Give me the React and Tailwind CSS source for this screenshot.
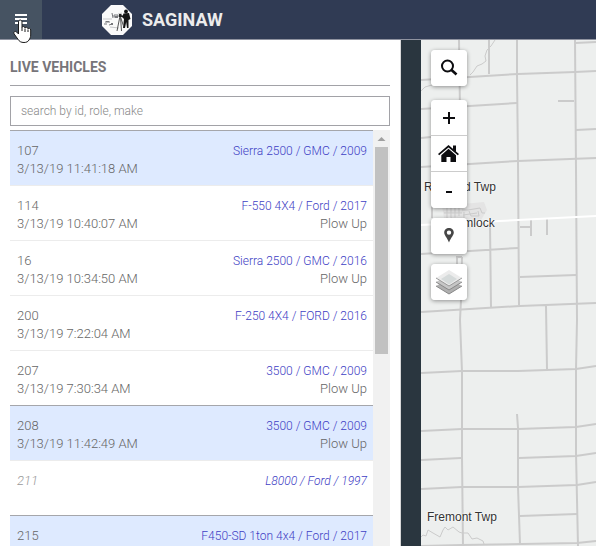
import React from "react";

const vehicles = [
  { id: "107", time: "3/13/19 11:41:18 AM", model: "Sierra 2500 / GMC / 2009", active: true },
  { id: "114", time: "3/13/19 10:40:07 AM", model: "F-550 4X4 / Ford / 2017", status: "Plow Up" },
  { id: "16", time: "3/13/19 10:34:50 AM", model: "Sierra 2500 / GMC / 2016", status: "Plow Up" },
  { id: "200", time: "3/13/19 7:22:04 AM", model: "F-250 4X4 / FORD / 2016" },
  { id: "207", time: "3/13/19 7:30:34 AM", model: "3500 / GMC / 2009", status: "Plow Up" },
  { id: "208", time: "3/13/19 11:42:49 AM", model: "3500 / GMC / 2009", status: "Plow Up", active: true },
  { id: "211", model: "L8000 / Ford / 1997", idle: true },
  { id: "215", model: "F450-SD 1ton 4x4 / Ford / 2017", active: true },
];

function Logo() {
  return (
    <svg className="h-[30px] w-[30px]" viewBox="0 0 30 30" aria-hidden="true">
      <path d="M9 0H21L30 9V21L21 30H9L0 21V9Z" fill="#fafafa" />
      <path d="M12 10h4v2h-4zM10 8l1 5M3 17h5M2 19h3M7 20l3-1" stroke="#77787c" fill="none" />
      <path d="M13 11h3v2h-3zM4 16h3v1H4zM9 18h2v2H9z" fill="#77787c" />
      <path d="M1 14h9M8 22l9 1M16 9l4-1" stroke="#c9cacc" fill="none" />
      <circle cx="24" cy="6.500" r="1.900" fill="#111" />
      <path d="M21.500 8.500l5.500-.5 1.500 6-2 1v8h-1.500l-.8-6-1.200 6h-2l1-9-2-2-2.500-.5.300-1.500 3 .5z" fill="#151515" />
      <path d="M18 11l-3 15M18.500 12l1 14M18.500 12l3 9" stroke="#555" fill="none" />
      <path d="M17 9h2.500v3H17z" fill="#222" />
    </svg>
  );
}

function HandCursor() {
  return (
    <svg className="pointer-events-none absolute left-[13px] top-[19px] z-20 h-[25px] w-[19px]" viewBox="0 0 19 25" aria-hidden="true">
      <path
        d="M5.500 15V3c0-2.600 3.500-2.600 3.500 0v5.500c.5-1.500 3-1.300 3 .5.600-1.200 3-.9 3 .8.700-1 2.700-.5 2.700 1.200V16c0 2-.7 3.500-1.700 5-.8 1.600-2.500 2.500-5 2.500-3 0-4.600-1-6-3.200L1.200 15C0 13 2.200 11.600 3.600 13z"
        fill="#fff"
        stroke="#1b1b1b"
        strokeLinejoin="round"
      />
      <path d="M9 8.500V12M12 9.500V13M15 10.500V13" stroke="#1b1b1b" fill="none" />
    </svg>
  );
}

function Header() {
  return (
    <header className="flex h-10 shrink-0 items-stretch border-b border-[#8f93a0] bg-[#303b54] text-[#ececec]">
      <button type="button" aria-label="Toggle menu" className="relative flex w-[42px] justify-center bg-[#465362] pt-3.5">
        <svg className="h-3 w-3" viewBox="0 0 12 12" aria-hidden="true">
          <path d="M0 1H12M0 5H12M0 9H12" stroke="#fff" strokeWidth="2" />
        </svg>
        <HandCursor />
      </button>
      <div className="ml-[60px] flex items-center gap-2.5">
        <Logo />
        <h1 className="text-[18px] font-bold leading-5">SAGINAW</h1>
      </div>
    </header>
  );
}

function VehicleRow({ vehicle }) {
  const { id, time, model, status, active, idle } = vehicle;
  return (
    <li
      className={`flex h-[55px] justify-between border-t px-1.5 pt-[11px] leading-[18px] ${
        active ? "border-[#a5a6ab] bg-[#deeaff]" : "border-[#ececec]"
      } ${idle ? "italic text-[#999]" : "text-[#666]"}`}
    >
      <div className="pl-px text-[13px]">
        <div>{id}</div>
        <div>{time}</div>
      </div>
      <div className="text-right">
        <a href="#vehicle" className="block text-[12px] text-[#4040c4]">{model}</a>
        <div className="text-[13px]">{status}</div>
      </div>
    </li>
  );
}

function Scrollbar() {
  return (
    <div className="flex w-[17px] shrink-0 flex-col items-center bg-[#f1f1f1]" aria-hidden="true">
      <svg className="h-[17px] w-[17px] shrink-0" viewBox="0 0 17 17">
        <path d="M4.500 11L8.500 7L12.500 11Z" fill="#a0a0a0" />
      </svg>
      <div className="h-[207px] w-[13px] bg-[#c1c1c1]" />
    </div>
  );
}

function Sidebar() {
  return (
    <aside className="flex min-h-0 min-w-0 flex-1 flex-col border-r border-[#d8d8d8] bg-white px-2.5">
      <h2 className="pb-[9px] pt-[18px] text-[14px] font-bold leading-[18px] text-[#77757a]">LIVE VEHICLES</h2>
      <div className="border-t border-[#a2a2a7]" />
      <input
        type="text"
        aria-label="Search vehicles"
        placeholder="search by id, role, make"
        className="mt-2.5 h-[30px] w-full shrink-0 border border-[#a2a2a7] px-2.5 text-[12px] font-light outline-none placeholder:text-[#888]"
      />
      <div className="mt-1 flex min-h-0 flex-1 overflow-hidden">
        <ul className="min-w-0 flex-1 font-light">
          {vehicles.map((vehicle) => (
            <VehicleRow key={vehicle.id} vehicle={vehicle} />
          ))}
        </ul>
        <Scrollbar />
      </div>
    </aside>
  );
}

function Roads() {
  return (
    <svg className="absolute inset-0 h-full w-full" viewBox="421 40 175 506" preserveAspectRatio="xMinYMin slice" aria-hidden="true">
      <path d="M442 206l42-4 3 8-6 10-36 4z" fill="#e4e4e4" />
      <g fill="none" stroke="#cbcbcb" strokeWidth="2">
        <path d="M459 40L460 110M489 40V74M517 40V74L518 162L519 305M575 40L576 170L577 320L576 369V453L578 546" />
        <path d="M421 80L518 74L575 72L596 71M421 109L517 103M421 138L431 137M421 167L518 161L596 158M575 43L596 42M558 101H574M576 130L596 129" />
        <path d="M421 254L518 248M490 225L491 307M520 227H530M531 219V236M547 218V235M520 277L576 275M421 312L520 306L596 303M546 306L547 369" />
        <path d="M462 257L461 300L460 320L462 372V458L463 546M457 264V257H462M432 203V218" />
        <path d="M421 373L462 371H518L576 369L596 366M517 414L518 428V487L520 544M421 431L462 429H518L576 427L596 424M421 460L461 458M519 458L576 456L596 453" />
        <path d="M421 489L462 487H518L577 485L596 482M520 516L577 514M421 546L462 545L577 543L596 541" />
      </g>
      <g fill="none" stroke="#cbcbcb">
        <path d="M444 213H462M447 207V218M451 205V218M455 204V218M459 207V216M462 210H468L480 208L482 213H485M464 212V218M469 211L471 216H479L478 211M463 215L477 213" />
        <path d="M495 40L491 46L487 50L485 56L486 61L482 64L477 66L473 72L470 75M421 91L425 87L432 85" />
        <path d="M421 537L423 535L426 536L428 530L433 533L440 537L443 530L445 527L448 530L453 527L459 532L462 533H468L472 539L477 538L483 541L484 544" />
      </g>
      <path d="M421 225L596 216" stroke="#fff" strokeWidth="2" />
    </svg>
  );
}

const buttonBase = "flex h-9 w-9 items-center justify-center bg-white text-[#0c0c0f]";
const card = "overflow-hidden rounded shadow-[0_1px_4px_rgba(0,0,0,0.4)]";

function MapControls() {
  return (
    <div className="relative flex w-fit flex-col gap-2.5 pl-2.5 pt-2.5">
      <div className={`${card} mb-1`}>
        <button type="button" aria-label="Search" className={buttonBase}>
          <svg className="h-[18px] w-[18px]" viewBox="0 0 18 18" aria-hidden="true">
            <circle cx="7.500" cy="7" r="5.500" fill="none" stroke="currentColor" strokeWidth="2" />
            <path d="M11 10.500L16.500 15.500" stroke="currentColor" strokeWidth="2.600" />
          </svg>
        </button>
      </div>
      <div className={`${card} flex flex-col divide-y divide-[#ccc]`}>
        <button type="button" aria-label="Zoom in" className={buttonBase}>
          <svg className="h-3 w-3" viewBox="0 0 12 12" aria-hidden="true">
            <path d="M6 0V12M0 6H12" stroke="currentColor" strokeWidth="2" />
          </svg>
        </button>
        <button type="button" aria-label="Home" className={buttonBase}>
          <svg className="h-[18px] w-[22px]" viewBox="0 0 22 18" aria-hidden="true">
            <path d="M.6 9.600L10.500 1.200L20.400 9.600" fill="none" stroke="currentColor" strokeWidth="1.800" />
            <path d="M15 .5H18V7L15 4.800Z" fill="currentColor" />
            <path d="M10.500 3.800L18 10.200V17H12.500V12H8.500V17H3.300V10.200Z" fill="currentColor" />
          </svg>
        </button>
        <button type="button" aria-label="Zoom out" className={buttonBase}>
          <svg className="h-3 w-3" viewBox="0 0 12 12" aria-hidden="true">
            <path d="M3 8H9" stroke="currentColor" strokeWidth="2" />
          </svg>
        </button>
      </div>
      <div className={card}>
        <button type="button" aria-label="Locate" className={buttonBase}>
          <svg className="h-4 w-2.5" viewBox="0 0 10 16" aria-hidden="true">
            <path fillRule="evenodd" fill="#464646" d="M5 0C2.300 0 .2 2 .2 4.600C.2 7.500 3 9.500 5 14.500C7 9.500 9.800 7.500 9.800 4.600C9.800 2 7.700 0 5 0ZM5 2.400A2.200 2.200 0 1 1 5 6.800A2.200 2.200 0 0 1 5 2.400Z" />
          </svg>
        </button>
      </div>
      <div className={card}>
        <button type="button" aria-label="Layers" className={buttonBase}>
          <svg className="h-[26px] w-[26px]" viewBox="0 0 26 26" aria-hidden="true">
            <path d="M0 17L13 10L26 17L13 25Z" fill="#b0b0b0" />
            <path d="M0 17L13 25L26 17" fill="none" stroke="#888" />
            <path d="M0 13L13 6L26 13L13 21Z" fill="#c6c6c6" />
            <path d="M0 13L13 21L26 13" fill="none" stroke="#888" />
            <path d="M0 9L13 1L26 9L13 17Z" fill="#ececec" />
            <path d="M5 10L13 5L21 10L13 15.500Z" fill="#d5dada" />
            <path d="M0 9L13 17L26 9" fill="none" stroke="#999" />
          </svg>
        </button>
      </div>
    </div>
  );
}

const label = "absolute whitespace-nowrap text-[12px] leading-[14px] text-[#333] [text-shadow:0_0_2px_white,0_0_2px_white]";

function MapPane() {
  return (
    <main className="relative w-[175px] shrink-0 overflow-hidden bg-[#edefee] font-['Liberation_Sans',sans-serif] sm:w-1/2">
      <Roads />
      <span className={`${label} left-[3px] top-[140px]`}>Richland Twp</span>
      <span className={`${label} left-[27px] top-[176px]`}>Hemlock</span>
      <span className={`${label} left-[6px] top-[470px]`}>Fremont Twp</span>
      <MapControls />
    </main>
  );
}

export default function App() {
  return (
    <div className="flex h-screen flex-col overflow-hidden bg-white font-[Roboto,sans-serif]">
      <Header />
      <div className="flex min-h-0 flex-1">
        <Sidebar />
        <div className="w-5 shrink-0 bg-[#2a363f]" />
        <MapPane />
      </div>
    </div>
  );
}
